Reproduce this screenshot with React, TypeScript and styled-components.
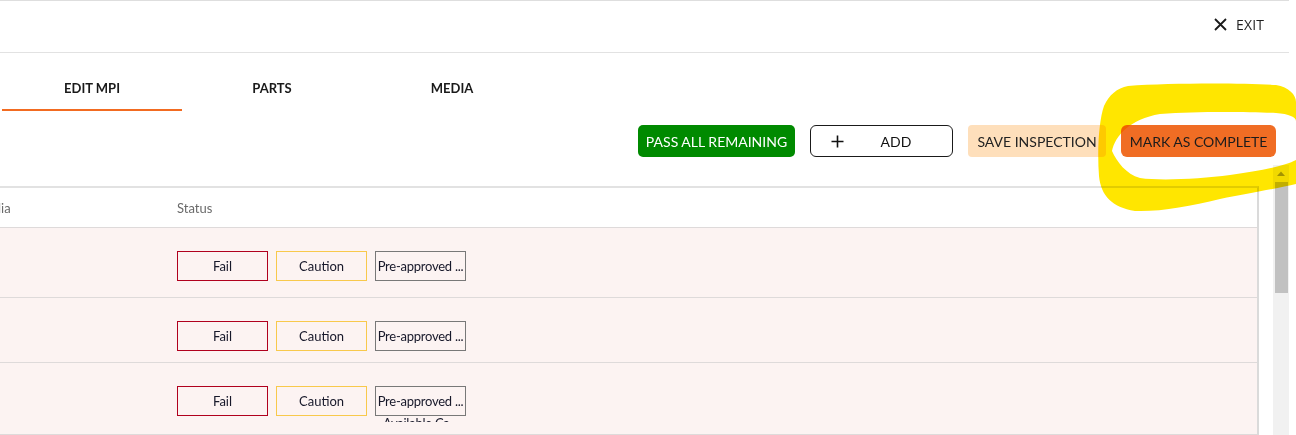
import React, { useLayoutEffect, useRef } from "react";
import styled, { createGlobalStyle, css } from "styled-components";

const GlobalStyle = createGlobalStyle`
  html, body { margin: 0; padding: 0; background: #ffffff; overflow: hidden; }
  body { font-family: Lato, "Open Sans", Arial, sans-serif; color: #222; }
  * { box-sizing: border-box; }
`;

const Screen = styled.div`
  position: relative;
  width: 1296px;
  height: 435px;
  overflow: hidden;
`;

const Page = styled.div`
  width: 1289px;
  height: 435px;
`;

const TopBar = styled.header`
  height: 53px;
  border-top: 1px solid #dedede;
  border-bottom: 1px solid #e2e2e2;
  display: flex;
  align-items: center;
  justify-content: flex-end;
  padding: 0 25px 4px 0;
`;

const ExitButton = styled.button`
  display: flex;
  align-items: center;
  gap: 9px;
  background: none;
  border: none;
  padding: 0;
  font-family: "Open Sans", "Noto Sans", Arial, sans-serif;
  font-size: 14px;
  color: #1f1f1f;
  letter-spacing: 0.1px;
`;

const Tabs = styled.nav`
  display: flex;
  padding-left: 2px;
`;

const Tab = styled.div<{ $active?: boolean }>`
  width: 180px;
  text-align: center;
  padding: 27px 0 13px;
  line-height: 16px;
  font-size: 13px;
  font-weight: 700;
  color: #1a1a1a;
  border-bottom: 2px solid ${(p) => (p.$active ? "#f26b21" : "transparent")};
`;

const Toolbar = styled.div`
  display: flex;
  justify-content: flex-end;
  gap: 15px;
  padding: 14px 13px 0 0;
  height: 54px;
`;

const ActionButton = styled.button<{ $variant: "green" | "outline" | "peach" | "orange" }>`
  height: 32px;
  padding: 0 10px;
  font-family: Lato, Arial, sans-serif;
  font-size: 14px;
  font-weight: 400;
  border: none;
  border-radius: 5px;
  display: flex;
  align-items: center;
  white-space: nowrap;
  ${(p) =>
    p.$variant === "green" &&
    css`
      background: #008a00;
      color: #ffffff;
      width: 157px;
      justify-content: center;
    `}
  ${(p) =>
    p.$variant === "outline" &&
    css`
      background: #ffffff;
      color: #111;
      border: 1px solid #1a1a1a;
      border-radius: 6px;
      width: 143px;
      padding: 0 4px 0 20px;
    `}
  ${(p) =>
    p.$variant === "peach" &&
    css`
      background: #fedfbb;
      color: #222;
      width: 138px;
      justify-content: center;
      border-radius: 4px;
    `}
  ${(p) =>
    p.$variant === "orange" &&
    css`
      background: #f06d24;
      color: #1c1c1c;
      width: 155px;
      justify-content: center;
      border-radius: 6px;
    `}
`;

const AddLabel = styled.span`
  flex: 1;
  text-align: center;
`;

const ScrollArea = styled.div`
  display: flex;
  height: 270px;
`;

const ScrollContent = styled.div`
  flex: 1;
  padding: 21px 14px 0 0;
  min-width: 0;
`;

const TableFrame = styled.div`
  width: 1259px;
  height: 100%;
  border-top: 2px solid #e2e2e2;
  border-right: 2px solid #dadada;
  overflow: hidden;
`;

const Table = styled.div`
  width: 1630px;
`;

const Row = styled.div<{ $header?: boolean; $h: number }>`
  display: grid;
  grid-template-columns: 320px 202px 1fr;
  height: ${(p) => p.$h}px;
  background: ${(p) => (p.$header ? "#ffffff" : "#fcf3f2")};
  border-bottom: 1px solid #dedada;
`;

const HeadCell = styled.div`
  display: flex;
  align-items: center;
  padding-left: 16px;
  font-size: 13px;
  color: #6a6a6a;
`;

const Cell = styled.div`
  padding: 23px 0 0 16px;
  font-size: 13px;
  color: #1e1e2a;
`;

const StatusGroup = styled.div`
  display: flex;
  gap: 8px;
`;

const StatusButton = styled.button<{ $tone: "fail" | "caution" | "pre" }>`
  width: 91px;
  height: 30px;
  background: transparent;
  border: 1px solid
    ${(p) => (p.$tone === "fail" ? "#b0001e" : p.$tone === "caution" ? "#f8c94c" : "#787878")};
  font-family: Lato, Arial, sans-serif;
  font-size: 13px;
  letter-spacing: ${(p) => (p.$tone === "pre" ? "-0.25px" : "0")};
  color: #17182a;
  padding: 0;
  overflow: visible;
  display: flex;
  align-items: flex-start;
  justify-content: center;
`;

const StatusLabel = styled.span<{ $wrap?: boolean }>`
  display: block;
  line-height: ${(p) => (p.$wrap ? "22px" : "16px")};
  padding-top: ${(p) => (p.$wrap ? "3px" : "6px")};
  max-height: ${(p) => (p.$wrap ? "35px" : "none")};
  overflow: hidden;
  text-align: center;
`;

const LabelLine = styled.span`
  display: block;
  white-space: nowrap;
`;

const Scrollbar = styled.div`
  width: 16px;
  background: #f1f1f1;
  display: flex;
  flex-direction: column;
`;

const ScrollArrow = styled.div`
  height: 17px;
  display: flex;
  align-items: center;
  justify-content: center;
`;

const ScrollThumb = styled.div`
  height: 111px;
  margin: 0 1px 0 2px;
  background: #c1c1c1;
`;

const Highlight = styled.svg`
  position: absolute;
  left: 0;
  top: 0;
  pointer-events: none;
  mix-blend-mode: multiply;
`;

const XIcon = () => (
  <svg width="13" height="13" viewBox="0 0 13 13">
    <path d="M1 1 L12 12 M12 1 L1 12" stroke="#1a1a1a" strokeWidth="1.8" fill="none" />
  </svg>
);

const PlusIcon = () => (
  <svg width="13" height="13" viewBox="0 0 13 13">
    <path d="M6.5 0.5 V12.5 M0.5 6.5 H12.5" stroke="#111" strokeWidth="1.6" fill="none" />
  </svg>
);

const rows = [
  { item: "Brake pads", h: 70, wrap: false },
  { item: "Wiper blades", h: 65, wrap: false },
  { item: "Cabin air filter", h: 72, wrap: true },
];

export default function App() {
  const frameRef = useRef<HTMLDivElement>(null);
  useLayoutEffect(() => {
    if (frameRef.current) frameRef.current.scrollLeft = 361;
  }, []);

  return (
    <Screen>
      <GlobalStyle />
      <Page>
        <TopBar>
          <ExitButton>
            <XIcon />
            EXIT
          </ExitButton>
        </TopBar>
        <Tabs>
          <Tab $active>EDIT MPI</Tab>
          <Tab>PARTS</Tab>
          <Tab>MEDIA</Tab>
        </Tabs>
        <Toolbar>
          <ActionButton $variant="green">PASS ALL REMAINING</ActionButton>
          <ActionButton $variant="outline">
            <PlusIcon />
            <AddLabel>ADD</AddLabel>
          </ActionButton>
          <ActionButton $variant="peach">SAVE INSPECTION</ActionButton>
          <ActionButton $variant="orange">MARK AS COMPLETE</ActionButton>
        </Toolbar>
        <ScrollArea>
          <ScrollContent>
            <TableFrame ref={frameRef}>
              <Table>
                <Row $header $h={40}>
                  <HeadCell>Item</HeadCell>
                  <HeadCell>Media</HeadCell>
                  <HeadCell>Status</HeadCell>
                </Row>
                {rows.map((r, i) => (
                  <Row key={i} $h={r.h}>
                    <Cell>{r.item}</Cell>
                    <Cell />
                    <Cell>
                      <StatusGroup>
                        <StatusButton $tone="fail">
                          <StatusLabel>Fail</StatusLabel>
                        </StatusButton>
                        <StatusButton $tone="caution">
                          <StatusLabel>Caution</StatusLabel>
                        </StatusButton>
                        <StatusButton $tone="pre">
                          <StatusLabel $wrap={r.wrap}>
                            <LabelLine>Pre-approved ...</LabelLine>
                            {r.wrap && <LabelLine>Available Ca...</LabelLine>}
                          </StatusLabel>
                        </StatusButton>
                      </StatusGroup>
                    </Cell>
                  </Row>
                ))}
              </Table>
            </TableFrame>
          </ScrollContent>
          <Scrollbar>
            <ScrollArrow>
              <svg width="8" height="5" viewBox="0 0 8 5">
                <path d="M0 5 L4 0.5 L8 5 Z" fill="#a3a3a3" />
              </svg>
            </ScrollArrow>
            <ScrollThumb />
          </Scrollbar>
        </ScrollArea>
      </Page>
      <Highlight width="1296" height="435" viewBox="0 0 1296 435">
        <path
          fillRule="evenodd"
          fill="#ffe600"
          d="M1128,86 C1170,83 1240,83 1276,85 C1289,87 1296,95 1296,102 L1296,184 C1280,188 1250,193 1220,199 C1190,206 1160,212 1135,211 C1112,207 1101,196 1099,176 C1097,150 1099,120 1104,106 C1109,95 1117,88 1128,86 Z
             M1160,114 C1200,111 1250,112 1276,113 C1289,114 1296,117 1296,121 L1296,160 C1285,166 1260,171 1230,175 C1200,179 1160,181 1140,178 C1126,174 1117,162 1112,151 C1115,136 1130,119 1160,114 Z"
        />
      </Highlight>
    </Screen>
  );
}
